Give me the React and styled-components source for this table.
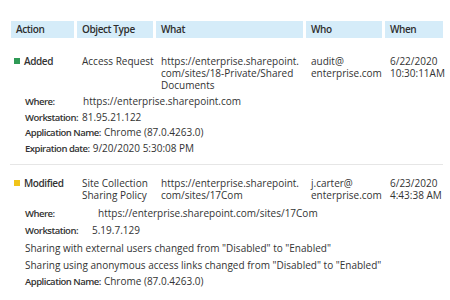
import styled, { createGlobalStyle, css } from "styled-components";

const GlobalStyle = createGlobalStyle`
    body {
        margin: 0;
        background: #fff;
        font-family: "Open Sans", "Liberation Sans", sans-serif;
        color: #333;
    }
`

const columns = '63px 76px 147px 76px 58px'

// semibold text in the reference is narrower than Open Sans 600, tighten it a bit
const strong = css`
    font-weight: 600;
    font-size: ${props => props.$size || 10}px;
    letter-spacing: ${props => props.$tight || -0.4}px;
`

const headerTitle = ['Action', 'Object Type', 'What', 'Who', 'When']

const entries = [
    {
        action: 'Added',
        color: '#2f9a56',
        type: ['Access Request'],
        what: ['https://enterprise.sharepoint.', 'com/sites/18-Private/Shared', 'Documents'],
        who: ['audit@', 'enterprise.com'],
        when: ['6/22/2020', '10:30:11AM'],
        lineHeight: 15.7,
        detailTop: 3,
        details: [
            { label: 'Where:', value: 'https://enterprise.sharepoint.com', width: 58 },
            { label: 'Workstation:', value: '81.95.21.122', width: 57 },
            { label: 'Application Name:', value: 'Chrome (87.0.4263.0)' },
            { label: 'Expiration date:', value: '9/20/2020 5:30:08 PM' },
        ],
    },
    {
        action: 'Modified',
        color: '#f1c41a',
        type: ['Site Collection', 'Sharing Policy'],
        what: ['https://enterprise.sharepoint.', 'com/sites/17Com'],
        who: ['j.carter@', 'enterprise.com'],
        when: ['6/23/2020', '4:43:38 AM'],
        lineHeight: 16.6,
        detailTop: 4,
        details: [
            { label: 'Where:', value: 'https://enterprise.sharepoint.com/sites/17Com', width: 73 },
            { label: 'Workstation:', value: '5.19.7.129', width: 67 },
            { value: 'Sharing with external users changed from "Disabled" to "Enabled"' },
            { value: 'Sharing using anonymous access links changed from "Disabled" to "Enabled"' },
            { label: 'Application Name:', value: 'Chrome (87.0.4263.0)' },
        ],
    },
]

function Lines({ items }) {
    return items.map((line, i) => <div key={i}>{line}</div>)
}

export default function App() {
    return (
        <Page>
            <GlobalStyle />
            <HeaderRow>
                {headerTitle.map(title => <HeaderCell key={title}>{title}</HeaderCell>)}
            </HeaderRow>
            {entries.map((entry, index) => (
                <Entry key={entry.action} $first={index === 0}>
                    <MainRow>
                        <ActionCell>
                            <Marker $color={entry.color} />
                            {entry.action}
                        </ActionCell>
                        <Cell><Lines items={entry.type} /></Cell>
                        <Cell><Lines items={entry.what} /></Cell>
                        <Cell><Lines items={entry.who} /></Cell>
                        <Cell><Lines items={entry.when} /></Cell>
                    </MainRow>
                    <Details $top={entry.detailTop} $lineHeight={entry.lineHeight}>
                        {entry.details.map((d, i) => (
                            <div key={i}>
                                {d.label && <Label $width={d.width} $size={9.5} $tight={-0.5}>{d.label}</Label>}
                                {d.value}
                            </div>
                        ))}
                    </Details>
                    {index === 0 && <Divider />}
                </Entry>
            ))}
        </Page>
    )
}

const Page = styled.div`
    padding: 21px 0 0 11px;
    font-size: 10px;
`

const HeaderRow = styled.div`
    display: grid;
    grid-template-columns: ${columns};
    column-gap: 3px;
`

const HeaderCell = styled.div`
    ${strong};
    background: #d5ecf9;
    height: 17px;
    line-height: 17px;
    padding-left: 5px;
    color: #2e2e2e;
`

const Entry = styled.div`
    margin-top: ${props => props.$first ? '17px' : '12px'};
`

const MainRow = styled.div`
    display: grid;
    grid-template-columns: ${columns};
    column-gap: 3px;
    line-height: 12px;
`

const Cell = styled.div`
    padding-left: 5px;
    white-space: nowrap;
`

const ActionCell = styled.div`
    ${strong};
    display: flex;
    align-items: center;
    height: 12px;
    padding-left: 3px;
`

const Marker = styled.span`
    width: 6px;
    height: 6px;
    margin-right: 4px;
    background: ${props => props.$color};
`

const Details = styled.div`
    margin-top: ${props => props.$top}px;
    padding-left: 14px;
    line-height: ${props => props.$lineHeight}px;
    white-space: nowrap;
`

const Label = styled.span`
    ${strong};
    display: inline-block;
    min-width: ${props => props.$width ? `${props.$width}px` : 'auto'};
    margin-right: ${props => props.$width ? 0 : 3}px;
`

const Divider = styled.div`
    height: 1px;
    background: #e6e6e6;
    margin: 7px 7px 0 -1px;
`
